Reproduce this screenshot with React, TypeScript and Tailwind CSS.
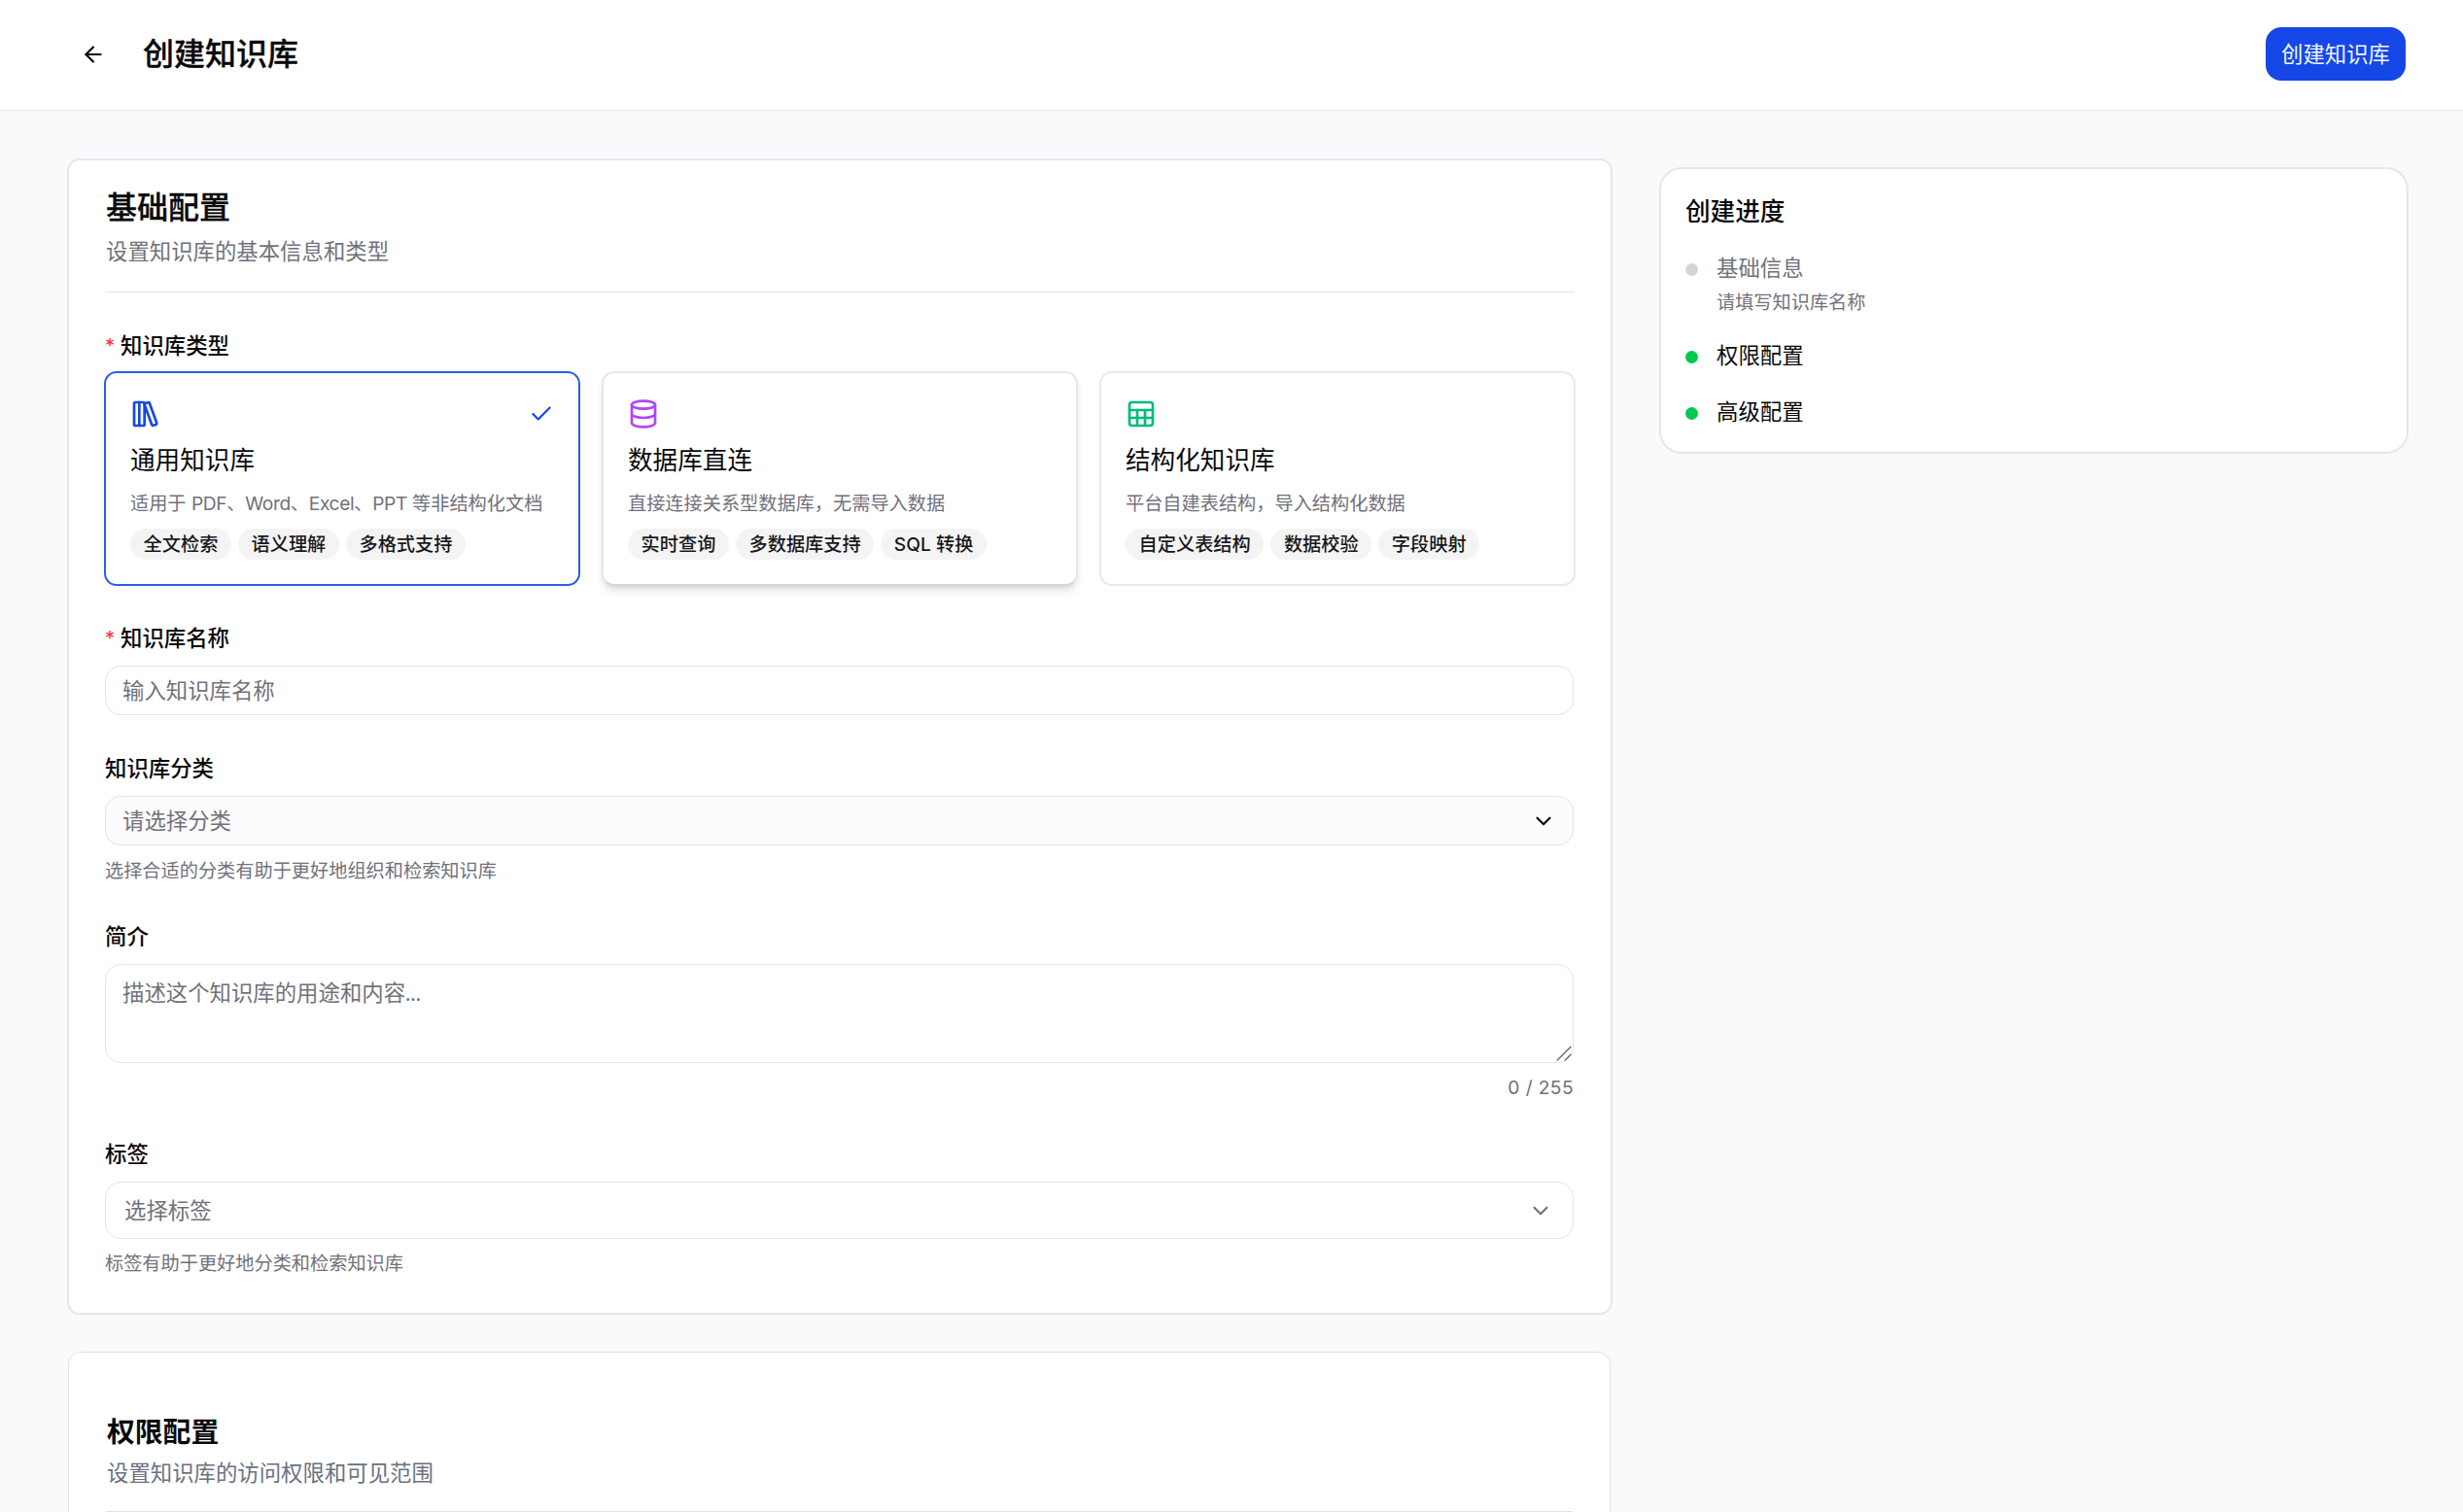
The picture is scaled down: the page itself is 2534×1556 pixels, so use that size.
import type { ReactNode } from "react";
import { ArrowLeft, Check, ChevronDown, Database, LibraryBig, Sheet, type LucideIcon } from "lucide-react";
import clsx from "clsx";

type KnowledgeType = {
  title: string;
  description: ReactNode;
  tags: string[];
  icon: LucideIcon;
  iconClass: string;
  cardClass: string;
  selected?: boolean;
};

const KNOWLEDGE_TYPES: KnowledgeType[] = [
  {
    title: "通用知识库",
    description: (
      <>
        适用于 <span className="tracking-[-0.35px]">PDF、Word、Excel、PPT </span>等非结构化文档
      </>
    ),
    tags: ["全文检索", "语义理解", "多格式支持"],
    icon: LibraryBig,
    iconClass: "text-[#1447e6]",
    cardClass: "border-[#2f5bea]",
    selected: true
  },
  {
    title: "数据库直连",
    description: "直接连接关系型数据库，无需导入数据",
    tags: ["实时查询", "多数据库支持", "SQL 转换"],
    icon: Database,
    iconClass: "text-[#ad46ff]",
    cardClass:
      "border-[#e6e6e7] border-b-[#d6d6d7] shadow-[0_6.4px_9.6px_-1.6px_rgb(0_0_0/0.1),0_3.2px_6.4px_-3.2px_rgb(0_0_0/0.1)]"
  },
  {
    title: "结构化知识库",
    description: "平台自建表结构，导入结构化数据",
    tags: ["自定义表结构", "数据校验", "字段映射"],
    icon: Sheet,
    iconClass: "text-[#00bc7d]",
    cardClass: "border-[#e9e9ea]"
  }
];

const STEPS = [
  { label: "基础信息", hint: "请填写知识库名称", done: false },
  { label: "权限配置", done: true },
  { label: "高级配置", done: true }
];

function FieldLabel({ children, required }: { children: ReactNode; required?: boolean }) {
  return (
    <div className="flex h-[22px] items-center gap-[5px] pt-px text-[22.4px] leading-[22px] font-medium">
      {required && <span className="w-[11px] text-[20px] font-normal text-[#fb2c36]">*</span>}
      <span>{children}</span>
    </div>
  );
}

function TypeCard({ item }: { item: KnowledgeType }) {
  const Icon = item.icon;
  return (
    <div className={clsx("h-[221px] rounded-[13px] border-2 bg-white p-[25px]", item.cardClass)}>
      <div className="flex h-[34px] items-center justify-between">
        <Icon className={clsx("size-8", item.iconClass)} />
        {item.selected && <Check className="size-[26px] text-[#1447e6]" />}
      </div>
      <div className="mt-[13px] h-[36px] text-[25.6px] leading-[36px]">{item.title}</div>
      <div className="mt-[13px] h-[26px] text-[19.2px] leading-[26px] whitespace-nowrap text-[#71717b]">
        {item.description}
      </div>
      <div className="mt-[13px] flex gap-[7px]">
        {item.tags.map((tag) => (
          <span
            className="flex h-8 items-center rounded-full bg-[#f4f4f5] px-[13.6px] text-[19.2px] leading-8 font-medium whitespace-nowrap text-[#18181b]"
            key={tag}
          >
            {tag}
          </span>
        ))}
      </div>
    </div>
  );
}

function ResizeHandle() {
  return (
    <svg
      className="pointer-events-none absolute right-[2px] bottom-[2px] size-4 text-[#6b6b6b]"
      viewBox="0 0 16 16"
      fill="none"
      stroke="currentColor"
      strokeWidth="1.4"
      strokeLinecap="round"
    >
      <path d="M1.2 15 15 1.2M9.2 15 15 9.2" />
    </svg>
  );
}

function BasicSection() {
  return (
    <section className="h-[1190px] rounded-[13px] border-2 border-[#e6e7e9] bg-white pt-[31px] pr-[38px] pl-[37px]">
      <h2 className="h-[36px] pl-px text-[32px] leading-[36px] font-medium [-webkit-text-stroke:0.3px]">基础配置</h2>
      <p className="mt-[11px] h-8 pl-px text-[22.4px] leading-8 text-[#71717b]">设置知识库的基本信息和类型</p>
      <div className="mt-[25px] -mr-px border-t border-[#e4e4e7]" />

      <div className="mt-[43px]">
        <FieldLabel required>知识库类型</FieldLabel>
        <div className="mt-4 -mr-[2px] -ml-px grid grid-cols-3 gap-[22px]">
          {KNOWLEDGE_TYPES.map((item) => (
            <TypeCard item={item} key={item.title} />
          ))}
        </div>
      </div>

      <div className="mt-[42px]">
        <FieldLabel required>知识库名称</FieldLabel>
        <input
          className="mt-[18px] block h-[51px] w-full rounded-2xl border border-[#e4e4e7] px-[17px] text-[22.4px] placeholder:text-[#71717b]"
          placeholder="输入知识库名称"
        />
      </div>

      <div className="mt-[43px]">
        <FieldLabel>知识库分类</FieldLabel>
        <div className="mt-[18px] flex h-[51px] items-center justify-between rounded-2xl border border-[#e4e4e7] bg-[#fcfcfc] px-[17px] text-[22.4px] text-[#71717b]">
          <span>请选择分类</span>
          <ChevronDown className="size-[26px] text-[#09090b]" />
        </div>
        <p className="mt-[13px] h-[26px] text-[19.2px] leading-[26px] text-[#71717b]">
          选择合适的分类有助于更好地组织和检索知识库
        </p>
      </div>

      <div className="mt-[43px]">
        <FieldLabel>简介</FieldLabel>
        <div className="relative mt-[18px]">
          <textarea
            className="block h-[102px] w-full resize-none rounded-2xl border border-[#e4e4e7] px-[17px] py-[13px] font-['Lato','Noto_Sans_CJK_SC',sans-serif] text-[22.4px] leading-[32px] placeholder:text-[#71717b]"
            placeholder="描述这个知识库的用途和内容..."
          />
          <ResizeHandle />
        </div>
        <p className="mt-[12px] h-[26px] text-right text-[19.2px] leading-[26px] tracking-[0.4px] text-[#71717b]">
          0 / 255
        </p>
      </div>

      <div className="mt-[44px]">
        <FieldLabel>标签</FieldLabel>
        <div className="mt-[18px] flex h-[59px] items-center justify-between rounded-2xl border border-[#e4e4e7] pr-[20px] pl-[19px] text-[22.4px] text-[#71717b]">
          <span>选择标签</span>
          <ChevronDown className="size-[26px]" />
        </div>
        <p className="mt-[12px] h-[26px] text-[19.2px] leading-[26px] text-[#71717b]">
          标签有助于更好地分类和检索知识库
        </p>
      </div>
    </section>
  );
}

function PermissionSection() {
  return (
    <section className="mr-[2px] ml-px mt-[38px] h-[400px] rounded-[13px] border border-[#e4e4e7] bg-white px-[38px] pt-[64px]">
      <h2 className="h-[36px] pl-px text-[28.8px] leading-[36px] font-semibold">权限配置</h2>
      <p className="mt-[8px] h-8 pl-px text-[22.4px] leading-8 text-[#6a7282]">设置知识库的访问权限和可见范围</p>
      <div className="mt-[23px] border-t border-[#e4e4e7]" />
    </section>
  );
}

function ProgressCard() {
  return (
    <aside className="mt-[9px] h-[295px] w-[771px] rounded-[23px] border-2 border-[#e6e7e9] bg-white px-[25px] pt-[26px]">
      <h3 className="h-[36px] text-[25.6px] leading-[36px] font-medium">创建进度</h3>
      <ul className="mt-[24px] flex flex-col gap-[26px]">
        {STEPS.map((step) => (
          <li className="flex gap-[19px]" key={step.label}>
            <span
              className={clsx("mt-[11px] size-[13px] rounded-full", step.done ? "bg-[#00c950]" : "bg-[#d1d5dc]")}
            />
            <div>
              <div className={clsx("h-8 text-[22.4px] leading-8", !step.done && "text-[#71717b]")}>{step.label}</div>
              {step.hint && (
                <div className="mt-[6px] h-[26px] text-[19.2px] leading-[26px] text-[#71717b]">{step.hint}</div>
              )}
            </div>
          </li>
        ))}
      </ul>
    </aside>
  );
}

export default function App() {
  return (
    <div className="h-[1556px] w-[2534px] overflow-hidden bg-[#f9fafb] font-['Inter','Noto_Sans_CJK_SC',sans-serif] text-[#09090b]">
      <header className="flex h-[114px] items-center justify-between border-b border-[#e4e6e9] bg-white pr-[59px] pb-[2px] pl-[83px]">
        <div className="flex items-center gap-[38px]">
          <ArrowLeft className="size-[26px]" />
          <h1 className="text-[32px] leading-[40px] font-medium [-webkit-text-stroke:0.3px]">创建知识库</h1>
        </div>
        <button className="h-[55px] w-[144px] rounded-2xl bg-[#1447e6] text-[22.4px] text-[#eff6ff]">
          创建知识库
        </button>
      </header>
      <main className="flex items-start justify-between pt-[49px] pr-[56px] pl-[69px]">
        <div className="w-[1590px]">
          <BasicSection />
          <PermissionSection />
        </div>
        <ProgressCard />
      </main>
    </div>
  );
}
